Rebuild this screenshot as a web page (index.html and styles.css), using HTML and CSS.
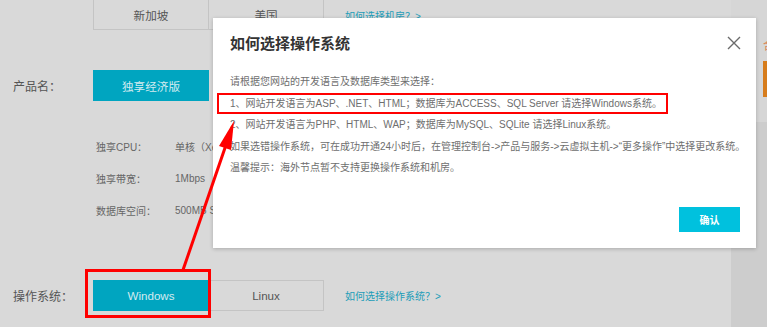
FILE: index.html
```html
<!DOCTYPE html>
<html lang="zh-CN">
<head>
<meta charset="utf-8">
<title>如何选择操作系统</title>
<link rel="stylesheet" href="styles.css">
</head>
<body>
<div class="screen">
  <div class="main">
    <div class="row row-region">
      <span class="label"></span>
      <div class="opts">
        <span class="opt opt-top">新加坡</span>
        <span class="opt opt-top">美国</span>
      </div>
      <a class="help">如何选择机房？&gt;</a>
    </div>
    <div class="row row-product">
      <span class="label">产品名：</span>
      <div class="opts">
        <span class="opt active">独享经济版</span>
      </div>
    </div>
    <div class="specs">
      <div class="spec"><span class="k">独享CPU：</span><span class="v">单核（Xeon E5）</span></div>
      <div class="spec"><span class="k">独享带宽：</span><span class="v">1Mbps</span></div>
      <div class="spec"><span class="k">数据库空间：</span><span class="v">500MB SQL Server</span></div>
    </div>
    <div class="row row-os">
      <span class="label">操作系统：</span>
      <div class="opts">
        <span class="opt active">Windows</span>
        <span class="opt">Linux</span>
      </div>
      <a class="help">如何选择操作系统？&gt;</a>
    </div>
  </div>
  <div class="side">
    <div class="side-top">
      <span class="side-text">合</span>
      <span class="side-btn"></span>
    </div>
  </div>

  <div class="modal">
    <div class="modal-head">
      <h2 class="modal-title">如何选择操作系统</h2>
      <svg class="close" width="14" height="14" viewBox="0 0 14 14"><path d="M1 1L13 13M13 1L1 13" stroke="#6b6b6b" stroke-width="1.4" fill="none"/></svg>
    </div>
    <div class="modal-body">
      <p>请根据您网站的开发语言及数据库类型来选择：</p>
      <p>1、网站开发语言为ASP、.NET、HTML；数据库为ACCESS、SQL Server 请选择Windows系统。</p>
      <p>2、网站开发语言为PHP、HTML、WAP；数据库为MySQL、SQLite 请选择Linux系统。</p>
      <p>如果选错操作系统，可在成功开通24小时后，在管理控制台-&gt;产品与服务-&gt;云虚拟主机-&gt;“更多操作”中选择更改系统。</p>
      <p>温馨提示：海外节点暂不支持更换操作系统和机房。</p>
    </div>
    <div class="modal-foot">
      <span class="btn-ok">确认</span>
    </div>
  </div>

  <div class="mark mark-line"></div>
  <div class="mark mark-win"></div>
  <svg class="arrow" width="767" height="327" viewBox="0 0 767 327">
    <line x1="183" y1="270" x2="226" y2="145" stroke="#f00" stroke-width="3"/>
    <polygon points="234,121 219,146 231,150" fill="#f00"/>
  </svg>
</div>
</body>
</html>
```
FILE: styles.css
```css
* { box-sizing: border-box; }
html, body { margin: 0; padding: 0; }
body {
  font-family: "Liberation Sans", "Noto Sans CJK SC", sans-serif;
  background: #d9d9d9;
}
.screen {
  position: relative;
  width: 767px;
  height: 327px;
  overflow: hidden;
  display: flex;
}
.main {
  width: 731px;
  background: #d9d9d9;
  display: flex;
  flex-direction: column;
}
.row {
  display: flex;
  align-items: center;
}
.label {
  width: 93px;
  padding-left: 13px;
  font-size: 12px;
  color: #555;
}
.opts { display: flex; }
.opt {
  width: 116px;
  height: 31px;
  display: flex;
  align-items: center;
  justify-content: center;
  border: 1px solid #c4c4c4;
  font-size: 11.6px;
  color: #555;
}
.opt + .opt { margin-left: -1px; }
.opt-top { height: 30px; border-top: none; }
.opt.active {
  background: #00a5c0;
  border-color: #00a5c0;
  color: #d3ebf0;
}
.help {
  margin-left: 21px;
  font-size: 10px;
  color: #1d9db8;
}
.row-region { height: 30px; }
.row-region .help { margin-top: 1px; }
.row-product { margin-top: 40px; height: 31px; }
.specs { margin-top: 29px; padding-left: 96px; }
.spec {
  display: flex;
  height: 32px;
  align-items: center;
  font-size: 10px;
  color: #666;
}
.spec .k { width: 79px; }
.row-os { margin-top: 54px; height: 31px; }

.side {
  width: 36px;
  background: #cdcdcd;
}
.side-top {
  height: 122px;
  background: #d6d6d6;
  padding-left: 32px;
  padding-top: 38px;
  display: flex;
  flex-direction: column;
}
.side-text {
  font-size: 12px;
  line-height: 16px;
  color: #d9895a;
}
.side-btn {
  margin-top: 7px;
  width: 30px;
  height: 36px;
  background: #d67c1c;
}

.modal {
  position: absolute;
  left: 213px;
  top: 18px;
  width: 543px;
  height: 230px;
  background: #fff;
  box-shadow: 0 1px 4px rgba(0,0,0,0.22);
  display: flex;
  flex-direction: column;
  padding: 16px 15px 16px 17px;
}
.modal-head {
  display: flex;
  justify-content: space-between;
  align-items: flex-start;
}
.modal-title {
  margin: 0;
  font-size: 15px;
  line-height: 20px;
  font-weight: bold;
  color: #333;
}
.close { margin-top: 2px; }
.modal-body {
  margin-top: 17px;
  font-size: 10px;
  line-height: 21.5px;
  color: #6e6e6e;
}
.modal-body p { margin: 0; white-space: nowrap; }
.modal-foot {
  margin-top: auto;
  display: flex;
  justify-content: flex-end;
  margin-right: 1px;
}
.btn-ok {
  width: 61px;
  height: 25px;
  background: #00c1de;
  color: #fff;
  font-size: 10px;
  font-weight: bold;
  display: flex;
  align-items: center;
  justify-content: center;
}

.mark {
  position: absolute;
  border: 2px solid #f00;
}
.mark-line { left: 217px; top: 93px; width: 451px; height: 21px; }
.mark-win { left: 85px; top: 269px; width: 126px; height: 49px; border-width: 3px; }
.arrow { position: absolute; left: 0; top: 0; }
```
